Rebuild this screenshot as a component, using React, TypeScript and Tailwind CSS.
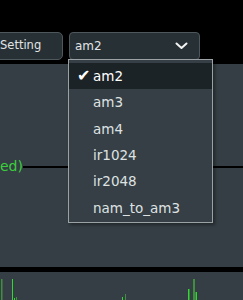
import { useState } from 'react'

const models = ['am2', 'am3', 'am4', 'ir1024', 'ir2048', 'nam_to_am3']

// bars of the level meter: x, top, width, colour
const bars = [
  { x: 1, y: 7, w: 1.5, c: '#3f8f3f' },
  { x: 12, y: 7, w: 1, c: '#33d633' },
  { x: 14, y: 26, w: 1, c: '#33d633' },
  { x: 16, y: 25, w: 1, c: '#3f8f3f' },
  { x: 122, y: 25, w: 1, c: '#33d633' },
  { x: 125, y: 22, w: 1, c: '#3f8f3f' },
  { x: 188, y: 17, w: 1.5, c: '#33d633' },
  { x: 193, y: 7, w: 2, c: '#3f8f3f' },
  { x: 195.5, y: 20, w: 1.5, c: '#33d633' },
]

export default function App() {
  const [selected] = useState('am2')

  return (
    <div className="relative w-[243px] h-[300px] overflow-hidden bg-black text-[#e2e4e5] font-['DejaVu_Sans',sans-serif]">
      {/* top bar */}
      <div className="h-[64px] pt-[32px] flex gap-[6px]">
        <button className="-ml-[26px] w-[89px] h-[28px] rounded-[5px] border border-[#4d575c] bg-[#263035] text-[11.5px] text-left pl-[25px]">
          Setting
        </button>
        <div className="w-[131px] h-[28px] rounded-[4px] border border-[#4d575c] bg-[#263035] flex items-center justify-between pl-[5px] pr-[11px] text-[12px]">
          <span>{selected}</span>
          <svg width="13" height="8" viewBox="0 0 13 8" fill="none">
            <polyline points="1.5,1.5 6.5,6 11.5,1.5" stroke="#f2f2f2" strokeWidth="2" strokeLinecap="round" strokeLinejoin="round" />
          </svg>
        </div>
      </div>

      {/* main panel */}
      <div className="h-[203px] bg-[#343e44] pt-[93px]">
        <div className="flex items-center h-[17px] mt-[1px]">
          <span className="text-[14px] leading-[17px] text-[#3ccf3c]">ed)</span>
          <div className="flex-1 h-[2px] bg-black" />
        </div>
      </div>

      <div className="h-[5px] bg-black" />

      {/* level meter */}
      <div className="h-[28px] bg-[#343e44]">
        <svg width="243" height="28">
          {bars.map((b, i) => (
            <rect key={i} x={b.x} y={b.y} width={b.w} height={28 - b.y} fill={b.c} />
          ))}
        </svg>
      </div>

      {/* open dropdown */}
      <div className="absolute left-[68px] top-[59px] w-[145px] border border-[#9ca1a4] bg-[#353f45] pt-[3px] pb-[1px] shadow-[2px_2px_3px_rgba(0,0,0,0.35)]">
        {models.map((m) => (
          <div
            key={m}
            className={`h-[26.3px] flex items-center text-[13.5px] ${m === selected ? 'bg-[#1c2326] text-white' : 'text-[#dfe2e3]'}`}
          >
            <span className="w-[24px] pl-[8px] text-[16px] leading-none">{m === selected ? '✔' : ''}</span>
            <span>{m}</span>
          </div>
        ))}
      </div>
    </div>
  )
}
